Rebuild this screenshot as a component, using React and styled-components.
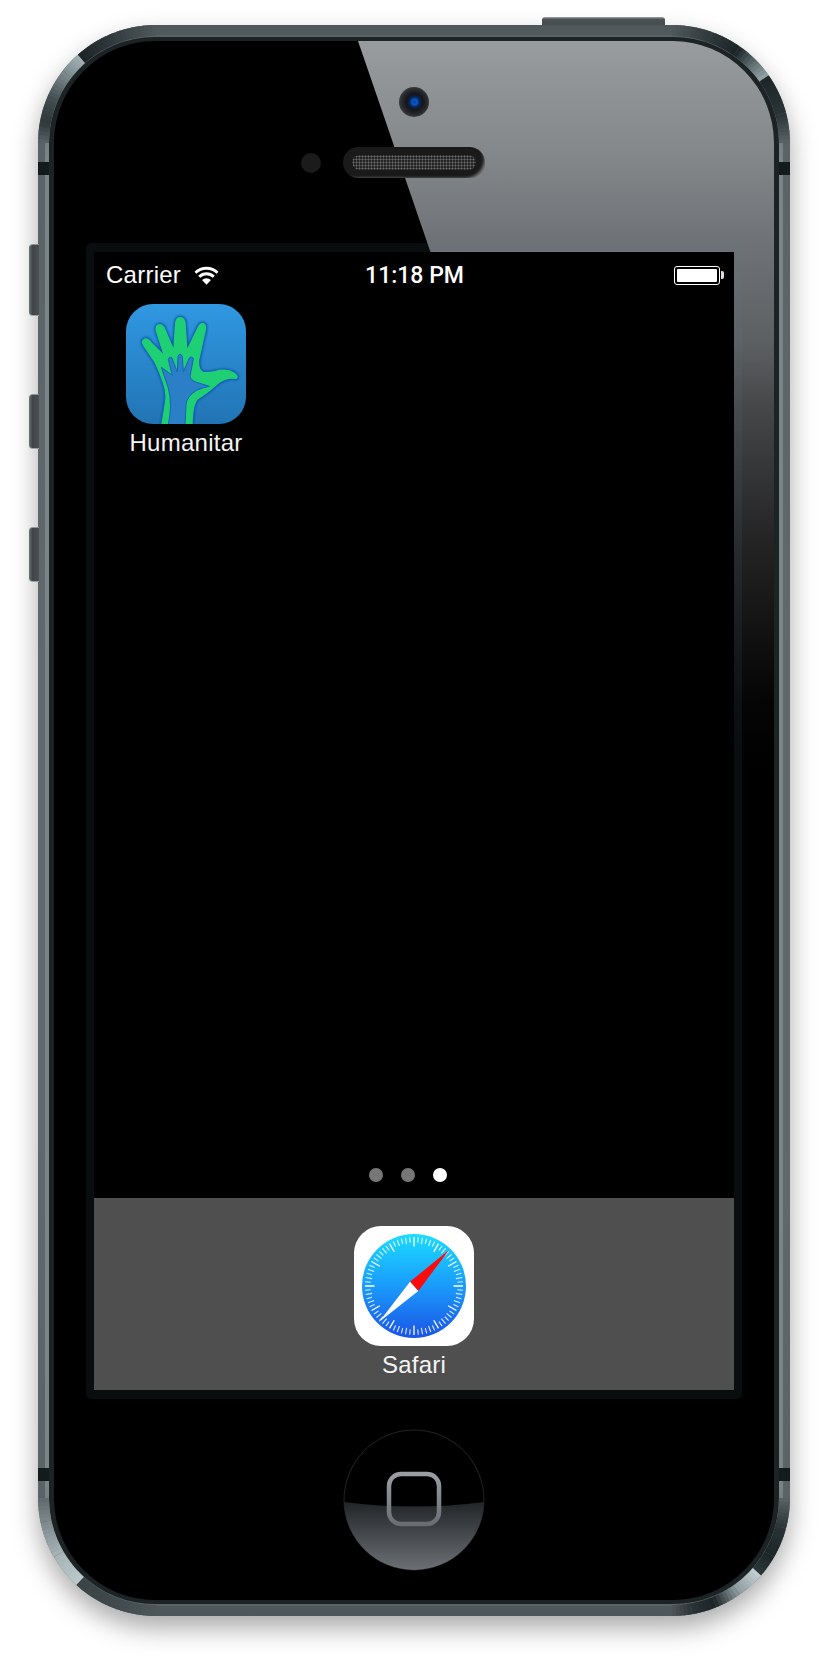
import styled, { createGlobalStyle } from "styled-components";

const GlobalStyle = createGlobalStyle`
  * { box-sizing: border-box; }
  html, body { margin: 0; background: #fff; }
`;

// corner highlights of the metal band, angle goes clockwise round each corner
const R = 112.5;
const corners = [
  {
    cx: 118, cy: 118, dir: (t) => [-Math.cos(t), -Math.sin(t)],
    stops: [[0, "#5a6467"], [10, "#2f383a"], [22, "#3f4a4d"], [38, "#7f8c8f"], [48.5, "#a4b2b5"], [48.5, "#1b2325"], [70, "#353e41"], [90, "#4f585b"]],
  },
  {
    cx: 634, cy: 118, dir: (t) => [Math.sin(t), -Math.cos(t)],
    stops: [[0, "#4f585b"], [20, "#2f383a"], [35, "#1b2426"], [45, "#5a6a6d"], [55, "#95a5a8"], [55, "#1c2628"], [75, "#2a3336"], [90, "#5a6467"]],
  },
  {
    cx: 634, cy: 1473, dir: (t) => [Math.cos(t), Math.sin(t)],
    stops: [[0, "#5a6467"], [15, "#2a3436"], [30, "#1c2628"], [41, "#2b3638"], [41, "#c4d0d3"], [55, "#8d9a9e"], [68, "#1a2426"], [80, "#2a3335"], [90, "#4d5659"]],
  },
  {
    cx: 118, cy: 1473, dir: (t) => [-Math.sin(t), Math.cos(t)],
    stops: [[0, "#4d5659"], [25, "#3e484b"], [42.5, "#3a4446"], [42.5, "#bccacd"], [60, "#a6b3b7"], [78, "#7d888b"], [90, "#5f696c"]],
  },
];

function hexMix(a, b, k) {
  const ch = (hex, i) => parseInt(hex.slice(1 + i * 2, 3 + i * 2), 16);
  const out = [0, 1, 2].map((i) => Math.round(ch(a, i) + (ch(b, i) - ch(a, i)) * k));
  return `rgb(${out.join(",")})`;
}

function arcPieces() {
  const pieces = [];
  corners.forEach((c) => {
    for (let i = 0; i < c.stops.length - 1; i++) {
      const [a0, col0] = c.stops[i];
      const [a1, col1] = c.stops[i + 1];
      const steps = Math.max(1, Math.ceil((a1 - a0) / 2));
      for (let s = 0; s < steps; s++) {
        const from = a0 + ((a1 - a0) * s) / steps;
        const to = a0 + ((a1 - a0) * (s + 1.15)) / steps;
        const p0 = c.dir((from * Math.PI) / 180);
        const p1 = c.dir((Math.min(to, a1) * Math.PI) / 180);
        pieces.push({
          d: `M${c.cx + R * p0[0]} ${c.cy + R * p0[1]}L${c.cx + R * p1[0]} ${c.cy + R * p1[1]}`,
          color: hexMix(col0, col1, (s + 0.5) / steps),
        });
      }
    }
  });
  return pieces;
}

function BandCorners() {
  return (
    <BandSvg viewBox="0 0 752 1591">
      {arcPieces().map((p, i) => (
        <path key={i} d={p.d} stroke={p.color} strokeWidth="11" fill="none" />
      ))}
    </BandSvg>
  );
}

function WifiIcon() {
  return (
    <svg width="25" height="19" viewBox="0 0 24 18">
      <g fill="none" stroke="#fff" strokeWidth="2.7">
        <path d="M1.4 6.4 A15 15 0 0 1 22.6 6.4" />
        <path d="M5 10.2 A10 10 0 0 1 19 10.2" />
      </g>
      <path d="M12 17.8 L7.7 13.4 A6 6 0 0 1 16.3 13.4 Z" fill="#fff" />
    </svg>
  );
}

function HandIcon() {
  const big =
    "M217 540 L228 470 Q232 440 220 410 Q210 380 195 350 L163 303 Q153 288 165 284 Q175 282 183 296 L226 338 L200 258 Q197 241 209 241 Q220 242 224 256 L252 322 L258 235 Q260 220 270 220 Q282 220 284 235 L290 322 L325 250 Q330 236 340 238 Q348 242 345 255 L325 345 Q322 370 335 382 Q345 388 375 382 Q410 372 430 385 Q445 395 438 400 Q405 396 380 418 Q350 445 322 462 Q306 478 305 540 Z";
  const small =
    "M235 540 Q248 480 235 430 L214 368 L247 392 L235 345 Q238 333 246 340 L262 382 L264 335 Q270 322 277 335 L280 382 L298 340 Q305 332 310 342 L300 395 Q303 408 320 413 L358 425 Q340 428 320 437 Q290 455 288 480 L285 540 Z";
  return (
    <svg width="120" height="120" viewBox="108 178 360 360">
      <defs>
        <filter id="handGlow" x="-20%" y="-20%" width="140%" height="140%">
          <feGaussianBlur stdDeviation="3" />
        </filter>
      </defs>
      <path d={big} fill="#0b55b0" stroke="#0b55b0" strokeWidth="13" filter="url(#handGlow)" />
      <path d={big} fill="#1fcf74" stroke="#1fcf74" strokeWidth="6" strokeLinejoin="round" />
      <path d={small} fill="#2a7fc6" stroke="#1266bb" strokeWidth="3" />
    </svg>
  );
}

function SafariIcon() {
  const ticks = [];
  for (let i = 0; i < 72; i++) {
    const t = (i * 5 * Math.PI) / 180;
    const long = i % 6 === 0;
    const inner = long ? 39.5 : i % 2 === 0 ? 42.5 : 43.5;
    ticks.push(
      <line
        key={i}
        x1={60 + inner * Math.sin(t)}
        y1={60 - inner * Math.cos(t)}
        x2={60 + 49 * Math.sin(t)}
        y2={60 - 49 * Math.cos(t)}
        stroke="#fff"
        strokeWidth={long ? 1.3 : 1.1}
        opacity={long ? 1 : 0.85}
      />
    );
  }
  return (
    <svg width="120" height="120" viewBox="0 0 120 120">
      <defs>
        <linearGradient id="safariDisc" x1="0" y1="0" x2="0" y2="1">
          <stop offset="0" stopColor="#1bdcff" />
          <stop offset="0.5" stopColor="#1a9bfb" />
          <stop offset="1" stopColor="#1b54e6" />
        </linearGradient>
      </defs>
      <circle cx="60" cy="60" r="52" fill="url(#safariDisc)" />
      {ticks}
      <polygon points="95,24 56,55.7 64.3,65" fill="#fd0a0a" />
      <polygon points="25,96 56,55.7 64.3,65" fill="#fff" />
    </svg>
  );
}

function HomeButton() {
  return (
    <svg width="142" height="142" viewBox="0 0 142 142">
      <defs>
        <linearGradient id="homeLower" x1="0" y1="0" x2="0" y2="1">
          <stop offset="0" stopColor="#212528" />
          <stop offset="1" stopColor="#6c7075" />
        </linearGradient>
        <linearGradient id="homeSquare" x1="0" y1="0" x2="0" y2="1">
          <stop offset="0" stopColor="#9a9ea3" />
          <stop offset="1" stopColor="#6a6e73" />
        </linearGradient>
      </defs>
      <circle cx="71" cy="71" r="70" fill="#000" stroke="#2c2d2f" strokeWidth="0.8" />
      <path d="M1.03 73 Q71 82 140.97 73 A70 70 0 0 1 1.03 73 Z" fill="url(#homeLower)" />
      <rect x="46" y="45" width="50" height="50" rx="12" fill="none" stroke="url(#homeSquare)" strokeWidth="4.5" />
    </svg>
  );
}

export default function App() {
  return (
    <Page>
      <GlobalStyle />
      <Shell>
        <VolumeKey $top={219} $h={72} />
        <VolumeKey $top={369} $h={55} />
        <VolumeKey $top={502} $h={55} />
        <PowerKey />
        <Rim>
          <Glass>
            <Glare />
            <TopBezel>
              <Camera />
              <SensorRow>
                <Sensor />
                <Speaker>
                  <Mesh />
                </Speaker>
              </SensorRow>
            </TopBezel>
            <ScreenFrame>
              <Screen>
                <StatusBar>
                  <Carrier>
                    Carrier
                    <WifiIcon />
                  </Carrier>
                  <Clock>11:18 PM</Clock>
                  <Battery>
                    <BatteryFill />
                  </Battery>
                </StatusBar>
                <Apps>
                  <App1>
                    <AppIcon $bg="linear-gradient(#3098e2, #2174b4)">
                      <HandIcon />
                    </AppIcon>
                    <AppLabel>Humanitar</AppLabel>
                  </App1>
                </Apps>
                <PageDots>
                  <Dot />
                  <Dot />
                  <Dot $active />
                </PageDots>
                <Dock>
                  <App1>
                    <AppIcon $bg="#fff">
                      <SafariIcon />
                    </AppIcon>
                    <AppLabel>Safari</AppLabel>
                  </App1>
                </Dock>
              </Screen>
            </ScreenFrame>
            <BottomBezel>
              <HomeButton />
            </BottomBezel>
          </Glass>
        </Rim>
        <BandCorners />
        <AntennaLine $y={137} $side="left" />
        <AntennaLine $y={137} $side="right" />
        <AntennaLine $y={1443} $side="left" />
        <AntennaLine $y={1443} $side="right" />
      </Shell>
    </Page>
  );
}

const Page = styled.div`
  width: 828px;
  height: 1668px;
  padding: 25px 0 0 38px;
  overflow: hidden;
  background: #fff;
  font-family: "Liberation Sans", Arial, sans-serif;
`;

const Shell = styled.div`
  position: relative;
  width: 752px;
  height: 1591px;
  padding: 10px 7px;
  border-radius: 118px;
  background: linear-gradient(#4f585b, #5a6467 8%, #5f686b 40%, #5f686b 70%, #5a6467 92%, #4d5659);
  box-shadow: 0 12px 26px rgba(0, 0, 0, 0.34);
`;

const BandSvg = styled.svg`
  position: absolute;
  inset: 0;
  width: 752px;
  height: 1591px;
  pointer-events: none;
`;

const AntennaLine = styled.div`
  position: absolute;
  top: ${(p) => p.$y}px;
  ${(p) => p.$side}: 0;
  width: 11px;
  height: 13px;
  background: #141b1d;
`;

const VolumeKey = styled.div`
  position: absolute;
  left: -9px;
  top: ${(p) => p.$top}px;
  width: 10px;
  height: ${(p) => p.$h}px;
  border-radius: 4px 0 0 4px;
  background: linear-gradient(90deg, #6b7275, #3f4548 35%, #4a5053);
  border-top: 1px solid #8b9295;
  border-bottom: 1px solid #9aa1a4;
`;

const PowerKey = styled.div`
  position: absolute;
  left: 504px;
  top: -8px;
  width: 123px;
  height: 9px;
  border-radius: 3px 3px 0 0;
  background: linear-gradient(#a3a8aa, #4b5154 25%, #474d50 70%, #4a5356);
`;

const Rim = styled.div`
  height: 100%;
  padding: 2px 4px;
  border-radius: 111px;
  background: linear-gradient(#596265, #7b8588 8%, #7b8588 92%, #596265);
`;

const Glass = styled.div`
  position: relative;
  height: 100%;
  display: flex;
  flex-direction: column;
  align-items: center;
  border-style: solid;
  border-color: #1b2325;
  border-width: 4px 5px;
  border-radius: 106px;
  background: #000;
  overflow: hidden;
`;

const Glare = styled.div`
  position: absolute;
  top: 0;
  left: 0;
  width: 100%;
  height: 760px;
  clip-path: polygon(304px 0, 100% 0, 100% 760px, 565px 760px);
  background: linear-gradient(#999c9f, #85888b 110px, #6f7276 200px, #5d6063 300px, #464749 366px, #343537 432px, #242425 500px, #131314 585px, #050506 660px, #000 730px);
`;

const TopBezel = styled.div`
  position: relative;
  flex: none;
  height: 202px;
  padding-top: 46px;
  display: flex;
  flex-direction: column;
  align-items: center;
  gap: 30px;
`;

const Camera = styled.div`
  width: 30px;
  height: 30px;
  border-radius: 50%;
  background: radial-gradient(circle at 52% 50%, #063a9a 0, #0a58c8 2.5px, #06275c 5px, #141619 8px, #25272a 12px, #36383c 15px);
`;

const SensorRow = styled.div`
  width: 226px;
  display: flex;
  align-items: center;
  gap: 22px;
`;

const Sensor = styled.div`
  width: 20px;
  height: 20px;
  border-radius: 50%;
  background: #1b1b1c;
`;

const Speaker = styled.div`
  width: 142px;
  height: 31px;
  padding: 8px 9px;
  border-radius: 16px;
  background: #1a1a1b;
  box-shadow: inset -4px -3px 3px -3px rgba(255, 255, 255, 0.4);
`;

const Mesh = styled.div`
  height: 15px;
  border-radius: 8px;
  background-color: #232324;
  background-image: radial-gradient(#6a6a6b 40%, transparent 55%);
  background-size: 3px 3px;
`;

const ScreenFrame = styled.div`
  position: relative;
  flex: none;
  width: 656px;
  height: 1156px;
  padding: 9px 8px;
  border-radius: 5px;
  background: rgba(100, 130, 140, 0.1);
`;

const Screen = styled.div`
  height: 100%;
  display: flex;
  flex-direction: column;
  background: #000;
`;

const StatusBar = styled.div`
  flex: none;
  height: 44px;
  padding: 2px 11px 0 12px;
  display: grid;
  grid-template-columns: 1fr auto 1fr;
  align-items: center;
  color: #fff;
`;

const Carrier = styled.div`
  display: flex;
  align-items: center;
  gap: 13px;
  font-size: 24px;
  letter-spacing: 0.25px;
`;

const Clock = styled.div`
  font-family: Roboto, "Liberation Sans", sans-serif;
  font-size: 23px;
  font-weight: 500;
`;

const Battery = styled.div`
  position: relative;
  justify-self: end;
  margin-right: 3px;
  width: 46px;
  height: 19px;
  padding: 2px;
  border: 1px solid #fff;
  border-radius: 3px;

  &::after {
    content: "";
    position: absolute;
    top: 4px;
    right: -5px;
    width: 3px;
    height: 8px;
    border-radius: 0 2px 2px 0;
    background: #ddd;
  }
`;

const BatteryFill = styled.div`
  height: 100%;
  border-radius: 1px;
  background: #fff;
`;

const Apps = styled.div`
  flex: 1;
  padding: 8px 0 0 32px;
`;

const App1 = styled.div`
  width: 120px;
  display: flex;
  flex-direction: column;
  align-items: center;
`;

const AppIcon = styled.div`
  width: 120px;
  height: 120px;
  border-radius: 27px;
  overflow: hidden;
  background: ${(p) => p.$bg};

  svg {
    display: block;
  }
`;

const AppLabel = styled.div`
  margin-top: 3px;
  color: #f4f4f4;
  font-size: 24px;
  line-height: 32px;
  letter-spacing: 0.25px;
  white-space: nowrap;
`;

const PageDots = styled.div`
  flex: none;
  display: flex;
  justify-content: center;
  gap: 18px;
  padding: 0 12px 16px 0;
`;

const Dot = styled.div`
  width: 14px;
  height: 14px;
  border-radius: 50%;
  background: ${(p) => (p.$active ? "#fff" : "#777")};
`;

const Dock = styled.div`
  flex: none;
  height: 192px;
  padding-top: 28px;
  display: flex;
  justify-content: center;
  background: #4f4f4f;
`;

const BottomBezel = styled.div`
  position: relative;
  flex: 1;
  display: flex;
  align-items: center;
  justify-content: center;
`;
